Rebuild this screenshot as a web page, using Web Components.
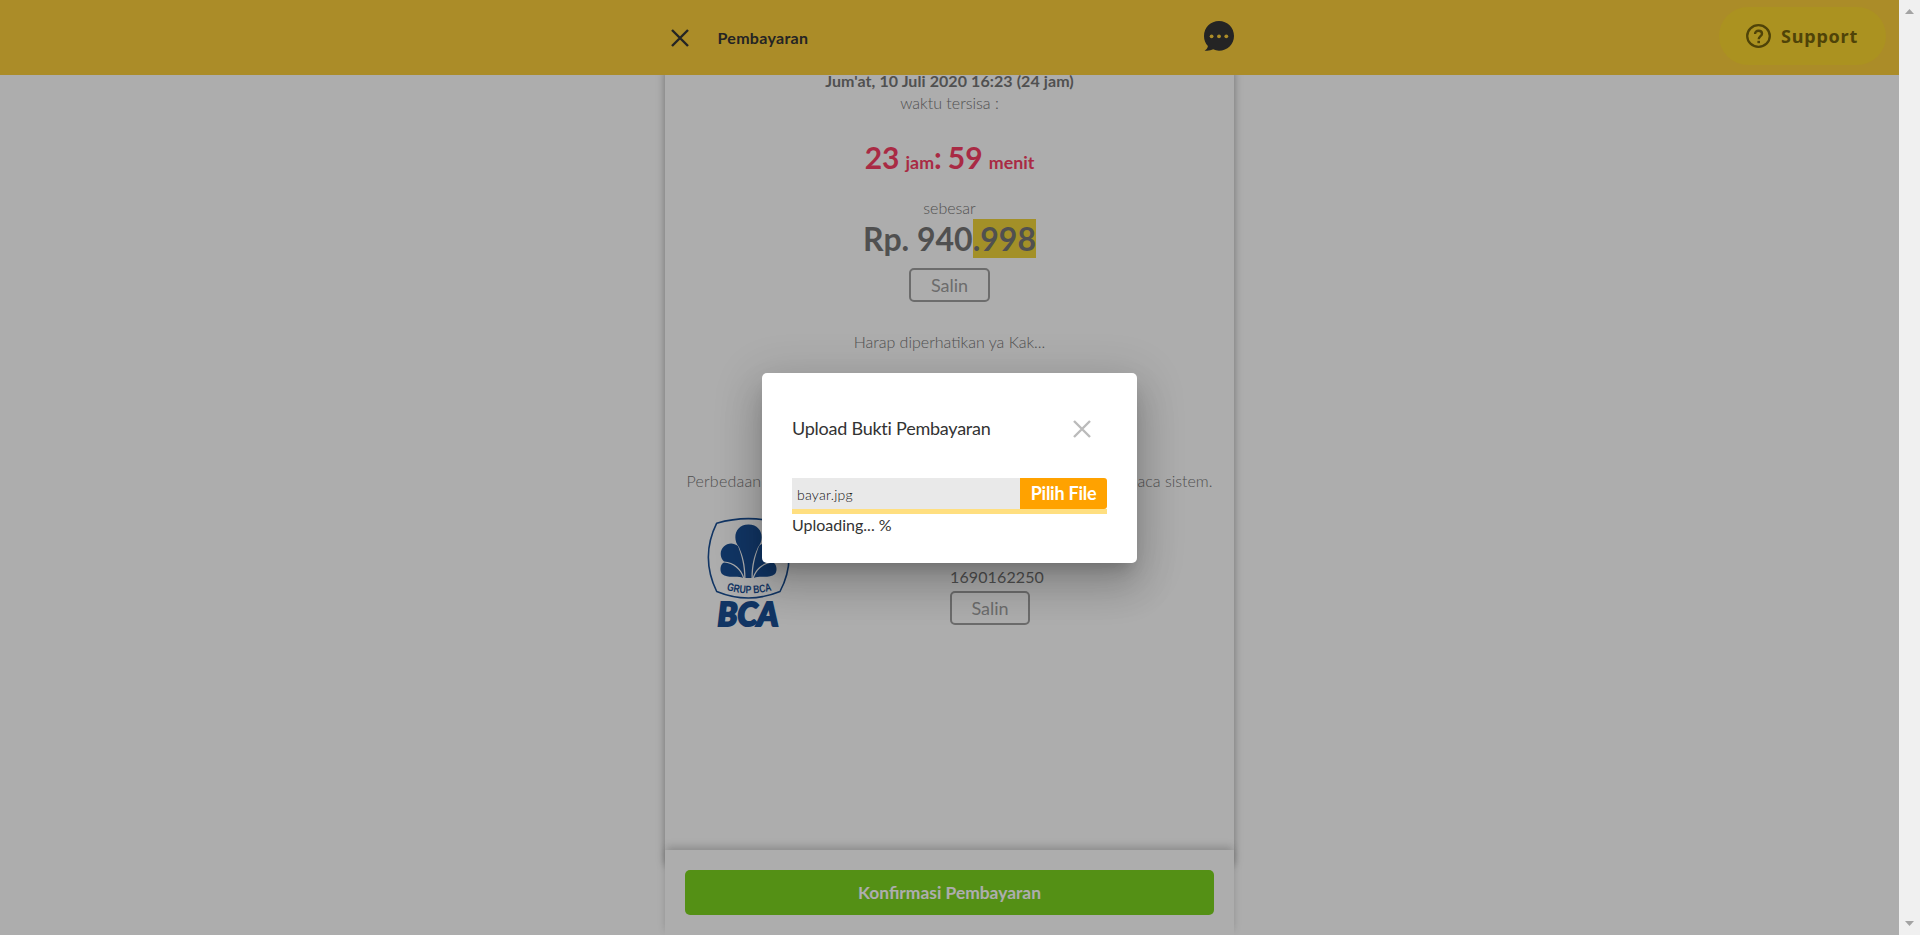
<!DOCTYPE html>
<html lang="id">
<head>
<meta charset="utf-8">
<title>Pembayaran</title>
<style>
html,body{margin:0;height:100%;overflow:hidden;background:#fff}
body{font-family:Lato,"Liberation Sans",sans-serif;font-size:16px;color:#777}
</style>
</head>
<body>
<payment-page></payment-page>
<script>
const define=(name,html)=>customElements.define(name,class extends HTMLElement{
  constructor(){super();const t=document.createElement('template');t.innerHTML=html;this.attachShadow({mode:'open'}).append(t.content.cloneNode(true));}
});

define('icon-close',`<style>:host{display:block;width:20px;height:20px}svg{display:block;width:100%;height:100%}</style>
<svg viewBox="0 0 20 20" fill="none" stroke="currentColor" stroke-width="2.4"><path d="M2 2 18 18M18 2 2 18"/></svg>`);

define('icon-chat',`<style>:host{display:block;width:30px;height:30px}svg{display:block}</style>
<svg width="30" height="30" viewBox="0 0 30 30"><path fill="#353535" d="M15 0C6.600 0 0 6.500 0 15c0 4 1.400 7.400 3.900 10C3.600 27 2.400 28.800 .6 29.500c3 .6 6.300 0 8.600-1.200 1.800.9 3.800 1.400 5.800 1.400 8.400 0 15-6.300 15-14.700S23.400 0 15 0Z"/><g fill="#fcce3b"><circle cx="7.600" cy="15.300" r="1.900"/><circle cx="15" cy="15.300" r="1.900"/><circle cx="22.300" cy="15.300" r="1.900"/></g></svg>`);

define('support-button',`<style>:host{display:flex;box-sizing:border-box;align-items:center;width:167px;height:58px;border-radius:29px;padding-left:27px;gap:10px;background:#fdd730;color:#75640c;font:700 18px "Noto Sans",sans-serif;letter-spacing:.8px}svg{display:block}</style>
<svg width="25" height="24" viewBox="0 0 25 24" fill="none" stroke="currentColor" stroke-width="2.300"><ellipse cx="12.500" cy="12" rx="11.300" ry="10.800"/><path stroke-width="2.400" d="M9.100 10C9 7.900 10.500 6.800 12.500 6.800s3.500 1.100 3.500 3c0 2.300-3.300 2.600-3.300 5.500"/><path stroke-width="2.600" d="M12.700 16.800v2.400"/></svg><span><slot></slot></span>`);

define('app-bar',`<style>:host{display:flex;justify-content:center;position:relative;z-index:2;height:75px;background:#fcce3b;color:#353535}
.in{width:569px;display:flex;align-items:center;box-sizing:border-box;padding:0 0 0 5px}
icon-close{margin-top:1px}.t{font-weight:700;font-size:16px;letter-spacing:.3px;margin-left:27.500px;flex:1;line-height:20px}icon-chat{margin-top:-3px}
support-button{position:absolute;right:13px;top:7px}</style>
<div class="in"><icon-close></icon-close><div class="t"><slot></slot></div><icon-chat></icon-chat></div><support-button>Support</support-button>`);

define('copy-button',`<style>:host{display:flex;box-sizing:border-box;width:81px;height:34px;border:2px solid #a0a0a0;border-radius:5px;align-items:center;justify-content:center;font-size:18px;font-weight:400;line-height:30px;color:#a0a0a0}</style><span><slot></slot></span>`);

define('count-down',`<style>:host{display:block;height:38px;font-weight:700;font-size:30px;line-height:38px;color:#fa3f65;white-space:nowrap;word-spacing:-1.200px}small{font-size:17.800px;line-height:1}</style>23 <small>jam</small>: 59 <small>menit</small>`);

define('amount-value',`<style>:host{display:flex;height:39px;font-weight:700;font-size:32px;line-height:39px;white-space:nowrap}mark{height:39px;background:#f1d43c;color:inherit}</style><span>Rp. 940</span><mark>.998</mark>`);

define('bca-logo',`<style>:host{display:block;width:84px;height:112px}svg{display:block;overflow:visible}</style>
<svg width="84" height="112" viewBox="0 0 84 112" fill="#1a4f94">
<path fill="none" stroke="#1a4f94" stroke-width="1.600" stroke-linejoin="round" d="M8.700 6.200Q40.300-3 72 6.200Q90 40 72 74.500Q40.300 87.500 8.700 74.500Q-8 40 8.700 6.200Z"/>
<path d="M37.500 61C37.500 48 35 39 31 30C24 22 27 7.500 40.500 7.500S57 22 50 30C46 39 43.500 48 43.500 61Z"/>
<path d="M36.300 61C36 48 34 40 30 29C23 23 12.500 28 12.700 37C12.700 40 14 42.500 16 44.500C26 45 34 52 36.300 61ZM44.700 61C45 48 47 40 51 29C58 23 68.500 28 68.300 37C68.300 40 67 42.500 65 44.500C55 45 47 52 44.700 61Z"/>
<path d="M35 61C33 53 25 46 16 45.500C12 47 11.500 54 14 57C20 62 29 58 35 61ZM46 61C48 53 56 46 65 45.500C69 47 69.500 54 67 57C61 62 52 58 46 61Z"/>
<path id="arc" fill="none" d="M18.500 73Q41 79.500 65 73"/>
<text font-family="Liberation Sans" font-weight="700" font-size="11"><textPath href="#arc" textLength="46" lengthAdjust="spacingAndGlyphs">GRUP BCA</textPath></text>
<text x="9.500" y="108.800" font-family="Lato" font-weight="900" font-style="italic" font-size="32" stroke="#1a4f94" stroke-width="2" textLength="61" lengthAdjust="spacingAndGlyphs">BCA</text></svg>`);

define('payment-card',`<style>:host{display:flex;flex-direction:column;align-items:center;box-sizing:border-box;width:569px;height:795px;margin-top:-5px;background:#fff;box-shadow:0 0 8px rgba(0,0,0,.35);font-weight:300}
.l{line-height:22px;height:22px;white-space:nowrap}b{font-weight:700;letter-spacing:.08px}
.diff{display:flex;justify-content:space-between;width:526px}.diff span:first-child{letter-spacing:.2px}
.acc{display:flex;width:569px;box-sizing:border-box;padding-left:43px}.num{margin:49px 0 0 158px;font-weight:400;letter-spacing:.12px}.num .l{margin-bottom:3px}.num copy-button{width:80px;letter-spacing:0}</style>
<div class="l"><b>Jum'at, 10 Juli 2020 16:23 (24 jam)</b></div>
<div class="l">waktu tersisa :</div>
<count-down style="margin-top:24px"></count-down>
<div class="l" style="margin-top:21px">sebesar</div>
<amount-value></amount-value>
<copy-button style="margin-top:10px">Salin</copy-button>
<div class="l" style="margin-top:29px">Harap diperhatikan ya Kak...</div>
<div class="l diff" style="margin-top:117px"><span>Perbedaan</span><span>baca sistem.</span></div>
<div class="acc" style="margin-top:25px"><bca-logo></bca-logo><div class="num"><div class="l">1690162250</div><copy-button>Salin</copy-button></div></div>`);

define('confirm-footer',`<style>:host{display:block;position:relative;z-index:1;box-sizing:border-box;width:569px;height:85px;margin-top:-15px;padding:20px 20px;background:#fff;box-shadow:0 -4px 8px -3px rgba(0,0,0,.1),0 -4px 8px rgba(0,0,0,.12)}
div{height:45px;line-height:45px;border-radius:5px;background:#7dd41f;color:#fff;text-align:center;font-size:17.400px;font-weight:700}</style><div><slot></slot></div>`);

define('upload-dialog',`<style>:host{display:block;box-sizing:border-box;width:375px;height:190px;padding:43px 30px 0;border-radius:5px;background:#fff;color:#333;box-shadow:0 11px 15px -7px rgba(0,0,0,.2),0 24px 38px 3px rgba(0,0,0,.14),0 9px 46px 8px rgba(0,0,0,.12)}
.h{display:flex;justify-content:space-between;align-items:center;height:24px;font-size:18px;letter-spacing:-.24px;padding-right:15px}.h icon-close{color:#bbb;margin-top:2px}
.f{display:flex;margin-top:38px;height:31px}.n{flex:1;background:#e9e9e9;padding-left:5px;font-size:14px;letter-spacing:.25px;font-weight:300;color:#111;line-height:33px}
.b{width:87px;background:#ffa200;color:#fff;border-radius:0 3px 3px 0;text-align:center;font-size:18px;letter-spacing:-.25px;font-weight:700;line-height:31px}
.p{height:5px;background:#ffdf80}.u{line-height:21px}</style>
<div class="h"><span>Upload Bukti Pembayaran</span><icon-close></icon-close></div>
<div class="f"><div class="n">bayar.jpg</div><div class="b">Pilih File</div></div><div class="p"></div><div class="u">Uploading... %</div>`);

define('scroll-track',`<style>:host{display:flex;flex-direction:column;justify-content:space-between;align-items:center;box-sizing:border-box;width:21px;height:935px;padding:9px 0 9px;background:#f0f0f0}svg{display:block}</style>
<svg width="9" height="5" fill="#a3a3a3"><path d="M0 5 4.500 0 9 5Z"/></svg><svg width="9" height="5" fill="#a3a3a3"><path d="M0 0 4.500 5 9 0Z"/></svg>`);

define('payment-page',`<style>:host{display:flex;width:1920px;height:935px;overflow:hidden}
main{position:relative;width:1899px;height:935px;overflow:hidden}
.c{display:flex;flex-direction:column;align-items:center}
.scrim{position:absolute;inset:0;z-index:5;display:flex;box-sizing:border-box;padding-top:1px;align-items:center;justify-content:center;background:rgba(0,0,0,.32)}</style>
<main><app-bar>Pembayaran</app-bar><div class="c"><payment-card></payment-card><confirm-footer>Konfirmasi Pembayaran</confirm-footer></div>
<div class="scrim"><upload-dialog></upload-dialog></div></main><scroll-track></scroll-track>`);
</script>
</body>
</html>
